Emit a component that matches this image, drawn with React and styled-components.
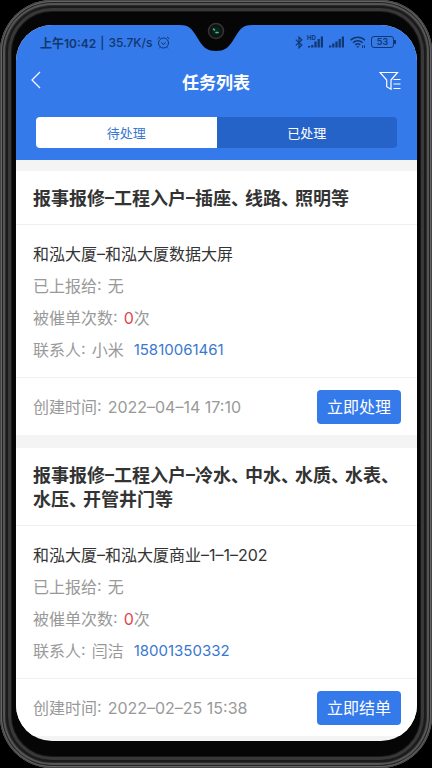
import { useState } from "react";
import styled, { createGlobalStyle } from "styled-components";

const tasks = [
  {
    id: 1,
    title: "报事报修–工程入户–插座、线路、照明等",
    place: "和泓大厦–和泓大厦数据大屏",
    reportedTo: "无",
    urged: 0,
    contact: "小米",
    phone: "15810061461",
    createdAt: "2022–04–14 17:10",
    action: "立即处理",
  },
  {
    id: 2,
    title: "报事报修–工程入户–冷水、中水、水质、水表、水压、开管井门等",
    place: "和泓大厦–和泓大厦商业–1–1–202",
    reportedTo: "无",
    urged: 0,
    contact: "闫洁",
    phone: "18001350332",
    createdAt: "2022–02–25 15:38",
    action: "立即结单",
  },
];

const StatusBar = () => (
  <Status>
    <StatusText>
      <Clock>上午10:42</Clock>
      <span>|</span>
      <span>35.7K/s</span>
      <svg width="13" height="13" viewBox="0 0 13 13" fill="none" stroke="currentColor">
        <circle cx="6.5" cy="7" r="5" />
        <path d="M4.3 6.6l2.2 1.8 2.2-1.8M.7 2.9L3 .9M12.3 2.9L10 .9M3 11.3l-1 1M10 11.3l1 1" />
      </svg>
    </StatusText>
    <StatusIcons>
      <svg width="8" height="13" viewBox="0 0 8 13" fill="none" stroke="currentColor" strokeWidth="1.2">
        <path d="M.8 3.6l6 5.4L4 11.9V1.1L6.8 4l-6 5.4" />
      </svg>
      <Signal>
        <HdMark>HD</HdMark>
        <Bars heights={[1.5, 2.5, 6, 8.5, 11]} />
      </Signal>
      <Bars heights={[2, 4, 6, 8.5, 11]} />
      <svg width="16" height="13" viewBox="0 0 16 13" fill="none" stroke="currentColor" strokeWidth="1.5">
        <path d="M.6 4.2c4-3.9 10.3-3.9 14.3 0M2.9 6.7c2.8-2.7 6.9-2.7 9.7 0M5.2 9c1.5-1.4 3.6-1.4 5.1 0" />
        <path d="M6.2 10.2h3.2l-1.6 1.9z" fill="currentColor" stroke="none" />
        <path d="M12.6 9.3v2.7M14.5 9.3v2.7" strokeWidth="1" />
      </svg>
      <Battery>53</Battery>
    </StatusIcons>
  </Status>
);

const Bars = ({ heights }) => (
  <svg width="16" height="12" viewBox="0 0 16 12" fill="currentColor">
    {heights.map((h, i) => (
      <rect key={h} x={i * 3.2} y={11.5 - h} width="2.2" height={h} />
    ))}
  </svg>
);

const Notch = () => (
  <NotchSvg width="72" height="51" viewBox="0 0 72 51">
    <path d="M0 24v1c8 0 11 3 15 9l5 8c4 6 8 9 16 9s12-3 16-9l5-8c4-6 7-9 15-9v-1z" fill="#060606" />
    <circle cx="36" cy="31" r="7.5" fill="#111413" stroke="#333635" strokeWidth="1.5" />
    <circle cx="36" cy="31" r="4" fill="#06251c" />
    <path d="M33.5 29l1 1M36 32.5h2" stroke="#4fc39a" strokeWidth="1.5" strokeLinecap="round" />
  </NotchSvg>
);

// CJK commas take half an em plus a little air
const TaskTitle = ({ text }) => (
  <Title>
    {text.split(/(、)/).map((part, i) =>
      part === "、" ? <Comma key={i}>、</Comma> : part
    )}
  </Title>
);

const TaskCard = ({ task }) => (
  <Card>
    <TaskTitle text={task.title} />
    <Details>
      <Place>{task.place}</Place>
      <Row>
        <Label>已上报给:</Label>
        {task.reportedTo}
      </Row>
      <Row>
        <Label>被催单次数:</Label>
        <Urged>{task.urged}</Urged>次
      </Row>
      <Row>
        <Label>联系人:</Label>
        {task.contact}
        <Phone href={`tel:${task.phone}`}>{task.phone}</Phone>
      </Row>
    </Details>
    <Footer>
      <Row>
        <Label>创建时间:</Label>
        {task.createdAt}
      </Row>
      <Action type="button">{task.action}</Action>
    </Footer>
  </Card>
);

export default function App() {
  const [tab, setTab] = useState(0);

  return (
    <>
      <GlobalStyle />
      <Device>
        <Notch />
        <Screen>
          <Header>
            <StatusBar />
            <Nav>
              <IconButton type="button" aria-label="返回">
                <svg width="10" height="18" viewBox="0 0 10 18" fill="none" stroke="currentColor" strokeWidth="1.2">
                  <path d="M9 1L1 9l8 8" />
                </svg>
              </IconButton>
              <NavTitle>任务列表</NavTitle>
              <IconButton type="button" aria-label="筛选">
                <svg width="22" height="20" viewBox="0 0 22 20" fill="none" stroke="currentColor" strokeWidth="1.2">
                  <path d="M1 1.5h17.500l-6.500 7.500v9.300l-4.300-2.600V9z" />
                  <path d="M14.5 8.5h7M14.5 13h7M14.5 17.5h7" />
                </svg>
              </IconButton>
            </Nav>
            <Tabs>
              {["待处理", "已处理"].map((name, i) => (
                <Tab key={name} type="button" $active={tab === i} onClick={() => setTab(i)}>
                  {name}
                </Tab>
              ))}
            </Tabs>
          </Header>
          <List>
            {tasks.map((task) => (
              <TaskCard key={task.id} task={task} />
            ))}
          </List>
        </Screen>
      </Device>
    </>
  );
}

const GlobalStyle = createGlobalStyle`
  * {
    box-sizing: border-box;
  }

  body {
    margin: 0;
    background: #000;
    font-family: Inter, "Noto Sans CJK SC", sans-serif;
    font-feature-settings: "case"; /* dashes centred on the CJK glyphs */
  }

  button {
    border: 0;
    padding: 0;
    font-family: inherit;
    cursor: pointer;
  }

  svg {
    display: block;
  }
`;

const Device = styled.div`
  position: relative;
  display: flex;
  min-height: 100vh;
  padding: 25px 15px 27px 16px;
  border-radius: 52px;
  background: #060606;
  box-shadow:
    inset 0 0 0 1px #444,
    inset 0 0 0 2px #666,
    inset 0 0 0 3px #222,
    inset 0 0 0 5px #555553,
    inset 0 0 0 6px #2b2b2b,
    inset 0 0 0 8px #1a1a1a,
    inset 0 0 0 11px #383838,
    inset 0 0 0 12px #181818;
`;

const NotchSvg = styled.svg`
  position: absolute;
  top: 0;
  left: 50%;
  margin-left: -36px;
`;

const Screen = styled.main`
  flex: 1;
  min-width: 0;
  overflow: hidden;
  border-radius: 36px;
  background: #f4f4f4;
`;

const Header = styled.header`
  background: #347aea;
  color: #fff;
  padding-bottom: 12px;
`;

const Status = styled.div`
  display: flex;
  justify-content: space-between;
  align-items: center;
  height: 34px;
  padding: 0 20px 0 24px;
  color: #12366f;
`;

const StatusText = styled.div`
  display: flex;
  align-items: center;
  gap: 4px;
  font-size: 12px;
  font-weight: 500;
`;

const Clock = styled.span`
  font-weight: 600;
`;

const StatusIcons = styled.div`
  display: flex;
  align-items: center;
  gap: 5px;
`;

const Signal = styled.div`
  position: relative;
`;

const HdMark = styled.span`
  position: absolute;
  top: -2px;
  left: -1px;
  font-size: 6px;
  font-weight: 700;
  line-height: 8px;
`;

const Battery = styled.div`
  position: relative;
  width: 23px;
  height: 12px;
  margin-right: 3px;
  border: 1px solid currentColor;
  border-radius: 3px;
  font-size: 9px;
  font-weight: 600;
  line-height: 10px;
  text-align: center;

  &::after {
    content: "";
    position: absolute;
    top: 3px;
    right: -3px;
    width: 2px;
    height: 4px;
    background: currentColor;
  }
`;

const Nav = styled.nav`
  display: flex;
  justify-content: space-between;
  align-items: center;
  height: 48px;
  padding: 0 16px 0 15px;
`;

const NavTitle = styled.h1`
  margin: 0;
  font-size: 17px;
  line-height: 24px;
  font-weight: 700;
`;

const IconButton = styled.button`
  display: flex;
  width: 22px;
  height: 24px;
  align-items: flex-start;
  background: none;
  color: #fff;
`;

const Tabs = styled.div`
  display: flex;
  margin: 10px 20px 0;
  border-radius: 4px;
  background: #2563c8;
  overflow: hidden;
`;

const Tab = styled.button`
  flex: 1;
  height: 31px;
  font-size: 13px;
  background: ${({ $active }) => ($active ? "#fff" : "transparent")};
  color: ${({ $active }) => ($active ? "#3a78cf" : "#fff")};
`;

const List = styled.div`
  display: flex;
  flex-direction: column;
  gap: 13px;
  padding: 11px 0 5px;
`;

const Card = styled.article`
  background: #fff;
`;

const Title = styled.h2`
  margin: 0;
  padding: 16px 16px 13px 17px;
  border-bottom: 1px solid #f0f0f0;
  color: #333;
  font-size: 18px;
  font-weight: 700;
  line-height: 24px;
`;

const Comma = styled.span`
  margin-right: 5px;
  font-feature-settings: "halt";
`;

const Details = styled.div`
  padding: 13px 17px 11px;
  border-bottom: 1px solid #f0f0f0;
`;

const Row = styled.div`
  display: flex;
  align-items: center;
  color: #999;
  font-size: 16px;
  line-height: 32px;
`;

const Place = styled(Row)`
  color: #333;
`;

const Label = styled.span`
  margin-right: 6px;
`;

const Urged = styled.span`
  color: #e0474c;
`;

const Phone = styled.a`
  margin-left: 10px;
  color: #3a78cf;
  font-size: 15px;
  text-decoration: none;
`;

const Footer = styled.footer`
  display: flex;
  justify-content: space-between;
  align-items: center;
  padding: 12px 16px 11px 17px;
`;

const Action = styled.button`
  width: 84px;
  height: 34px;
  border-radius: 4px;
  background: #347aea;
  color: #fff;
  font-size: 16px;
  line-height: 32px;
`;
